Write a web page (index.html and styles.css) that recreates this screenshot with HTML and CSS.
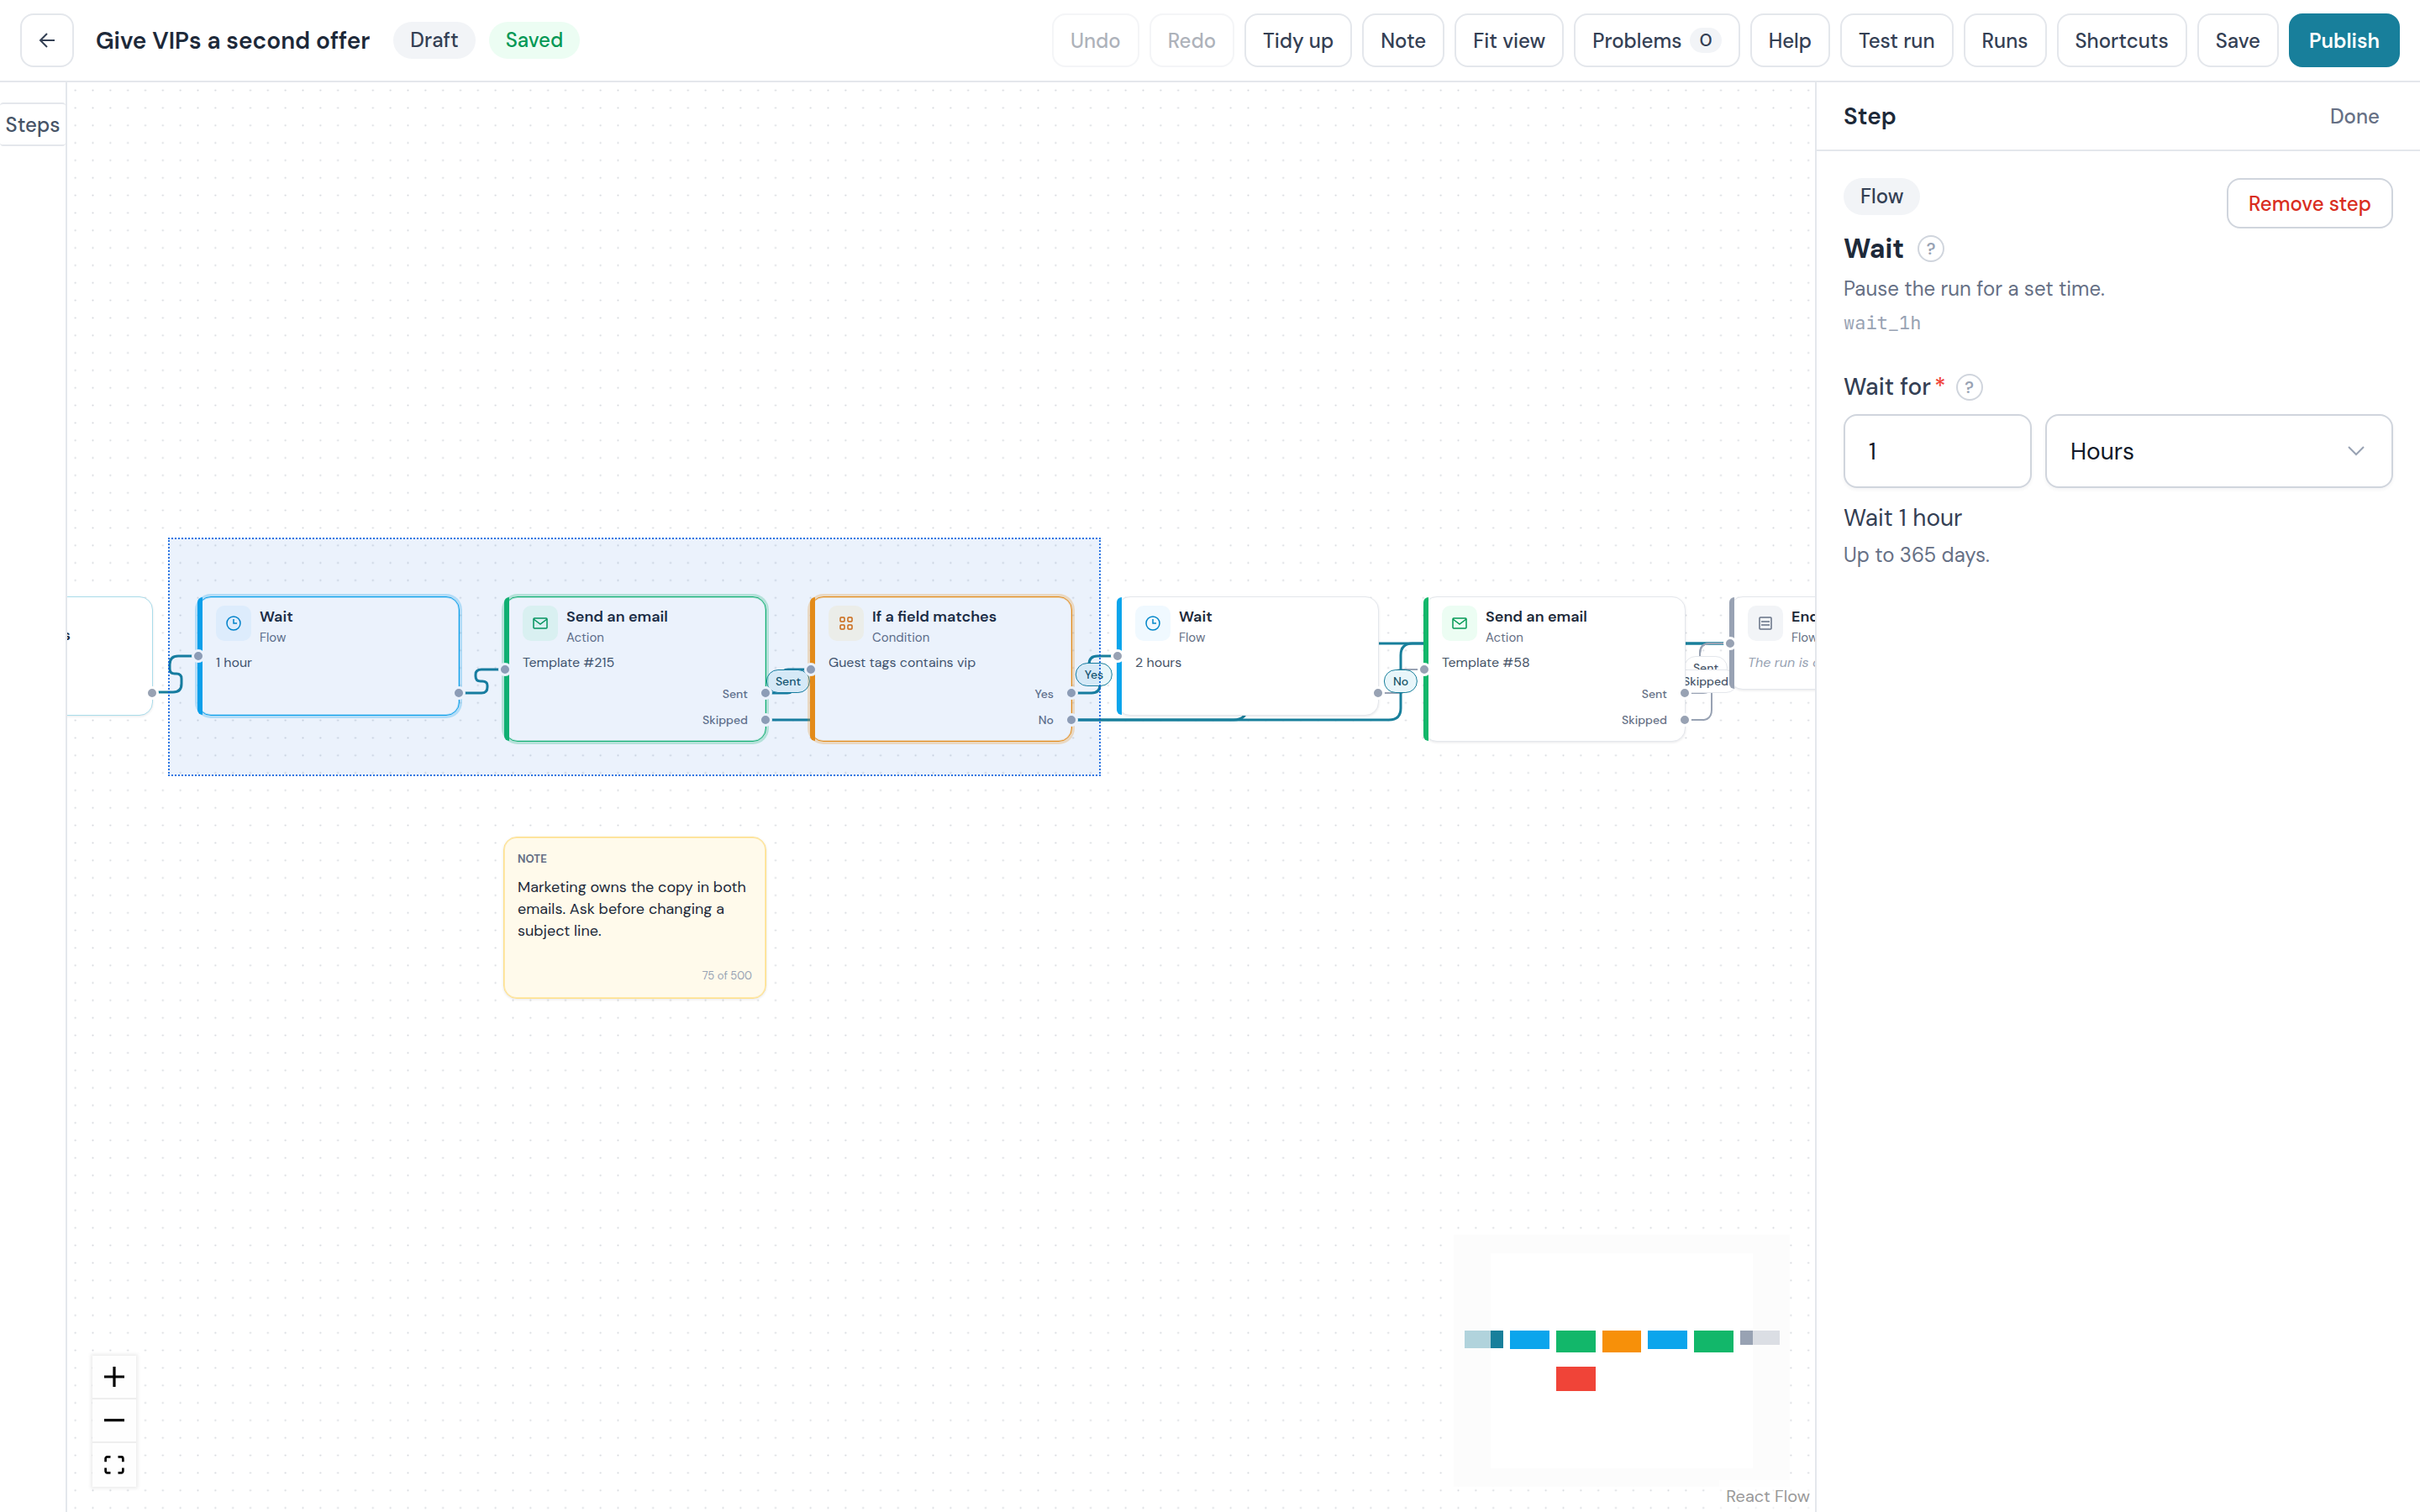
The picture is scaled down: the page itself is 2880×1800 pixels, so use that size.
FILE: index.html
```html
<!DOCTYPE html>
<html lang="en">
<head>
  <meta charset="UTF-8">
  <title>Give VIPs a second offer</title>
  <link rel="stylesheet" href="styles.css">
</head>
<body>

  <!-- TOP BAR -->
  <header class="topbar">
    <button class="btn btn-back" type="button" aria-label="Back">
      <svg width="20" height="20" viewBox="0 0 20 20"><path d="M19 10H2M10 2L2 10l8 8"/></svg>
    </button>
    <h1>Give VIPs a second offer</h1>
    <span class="pill">Draft</span>
    <span class="pill pill-saved">Saved</span>
    <div class="actions">
      <button class="btn" type="button" disabled>Undo</button>
      <button class="btn" type="button" disabled>Redo</button>
      <button class="btn" type="button">Tidy up</button>
      <button class="btn" type="button">Note</button>
      <button class="btn" type="button">Fit view</button>
      <button class="btn" type="button">Problems <span class="count">0</span></button>
      <button class="btn" type="button">Help</button>
      <button class="btn" type="button">Test run</button>
      <button class="btn" type="button">Runs</button>
      <button class="btn" type="button">Shortcuts</button>
      <button class="btn" type="button">Save</button>
      <button class="btn btn-primary" type="button">Publish</button>
    </div>
  </header>

  <main class="editor">

    <!-- LEFT RAIL -->
    <aside class="rail">
      <button class="rail-btn" type="button">Steps</button>
    </aside>

    <!-- CANVAS -->
    <section class="canvas">
      <svg class="layer" width="100%" height="100%">
        <defs>
          <pattern id="dots" width="16" height="16" patternUnits="userSpaceOnUse" patternTransform="translate(-0.750 -0.830) scale(1.302083)">
            <circle cx="8" cy="8" r="0.800" fill="#d3d6db"/>
          </pattern>
        </defs>
        <rect width="100%" height="100%" fill="url(#dots)"/>
      </svg>

      <svg class="layer edges" width="100%" height="100%">
        <g transform="translate(-80 -98)">
          <path class="edge" d="M1641 825H1666Q1673 825 1673 818V816Q1673 811 1668 811H1666Q1660 811 1660 805V803Q1660 797 1667 797H1694"/>
          <path class="edge active" d="M183 824H206Q216 824 216 814V808Q216 802 210 802H208Q202 802 202 796V791Q202 781 212 781H235"/>
          <path class="edge active" d="M548 825H573Q580 825 580 818V816Q580 811 574 811H572Q566 811 566 805V803Q566 797 573 797H600"/>
          <path class="edge active" d="M912 825H937Q944 825 944 818V816Q944 811 939 811H937Q931 811 931 805V803Q931 797 938 797H964"/>
          <path class="edge active" d="M1277 825H1299Q1309 825 1309 815V809Q1309 803 1303 803H1302Q1296 803 1296 797V791Q1296 781 1306 781H1329"/>
          <path class="edge active" d="M912 857H1468Q1484 857 1484 841V782Q1484 766 1500 766H2057"/>
          <path class="edge active" d="M1277 857H1653Q1667 857 1667 843V780Q1667 766 1681 766H2057"/>
          <path class="edge" d="M2003 825H2027Q2037 825 2037 815V802Q2037 796 2031 796H2029Q2023 796 2023 790V778Q2023 766 2035 766H2057"/>
          <path class="edge" d="M2003 857H2025Q2037 857 2037 845V817Q2037 811 2031 811H2029Q2023 811 2023 805V778Q2023 766 2035 766H2057"/>
        </g>
      </svg>

      <span class="edge-label on label-1">Sent</span>
      <span class="edge-label on label-2">Yes</span>
      <span class="edge-label on label-3">No</span>
      <span class="edge-label label-4">Sent</span>
      <span class="edge-label label-5">Skipped</span>

      <!-- NODES -->
      <article class="node short trigger node-0">
        <strong>s</strong>
        <i class="handle right out-1"></i>
      </article>

      <article class="node short flow selected node-1">
        <div class="node-head">
          <span class="node-icon"><svg width="20" height="20" viewBox="0 0 20 20"><circle cx="10" cy="10" r="8"/><path d="M10 5v5h4"/></svg></span>
          <div><h3>Wait</h3><small>Flow</small></div>
        </div>
        <p>1 hour</p>
        <i class="handle in-high"></i>
        <i class="handle right out-1"></i>
      </article>

      <article class="node action selected node-2">
        <div class="node-head">
          <span class="node-icon"><svg width="20" height="20" viewBox="0 0 20 20"><rect x="2" y="4" width="16" height="12" rx="1"/><path d="M2 5l8 6 8-6"/></svg></span>
          <div><h3>Send an email</h3><small>Action</small></div>
        </div>
        <p>Template #215</p>
        <ul class="ports"><li>Sent</li><li>Skipped</li></ul>
        <i class="handle in-mid"></i>
        <i class="handle right out-1"></i>
        <i class="handle right out-2"></i>
      </article>

      <article class="node condition selected node-3">
        <div class="node-head">
          <span class="node-icon"><svg width="20" height="20" viewBox="0 0 20 20"><rect x="3" y="3" width="5" height="5" rx="1"/><rect x="12" y="3" width="5" height="5" rx="1"/><rect x="3" y="12" width="5" height="5" rx="1"/><rect x="12" y="12" width="5" height="5" rx="1"/></svg></span>
          <div><h3>If a field matches</h3><small>Condition</small></div>
        </div>
        <p>Guest tags contains vip</p>
        <ul class="ports"><li>Yes</li><li>No</li></ul>
        <i class="handle in-mid"></i>
        <i class="handle right out-1"></i>
        <i class="handle right out-2"></i>
      </article>

      <article class="node short flow node-4">
        <div class="node-head">
          <span class="node-icon"><svg width="20" height="20" viewBox="0 0 20 20"><circle cx="10" cy="10" r="8"/><path d="M10 5v5h4"/></svg></span>
          <div><h3>Wait</h3><small>Flow</small></div>
        </div>
        <p>2 hours</p>
        <i class="handle in-high"></i>
        <i class="handle right out-1"></i>
      </article>

      <article class="node action node-5">
        <div class="node-head">
          <span class="node-icon"><svg width="20" height="20" viewBox="0 0 20 20"><rect x="2" y="4" width="16" height="12" rx="1"/><path d="M2 5l8 6 8-6"/></svg></span>
          <div><h3>Send an email</h3><small>Action</small></div>
        </div>
        <p>Template #58</p>
        <ul class="ports"><li>Sent</li><li>Skipped</li></ul>
        <i class="handle in-mid"></i>
        <i class="handle right out-1"></i>
        <i class="handle right out-2"></i>
      </article>

      <article class="node end node-6">
        <div class="node-head">
          <span class="node-icon"><svg width="20" height="20" viewBox="0 0 20 20"><rect x="3" y="3" width="14" height="14" rx="1"/><path d="M5 8h10M5 12h10"/></svg></span>
          <div><h3>End</h3><small>Flow</small></div>
        </div>
        <p class="muted">The run is over</p>
        <i class="handle in-end"></i>
      </article>

      <article class="note">
        <h4>NOTE</h4>
        <p>Marketing owns the copy in both emails. Ask before changing a subject line.</p>
        <small>75 of 500</small>
      </article>

      <div class="selection"></div>

      <div class="controls">
        <button type="button" aria-label="Zoom in"><svg width="24" height="24" viewBox="0 0 32 32"><path d="M32 18.133H18.133V32h-4.266V18.133H0v-4.266h13.867V0h4.266v13.867H32z"/></svg></button>
        <button type="button" aria-label="Zoom out"><svg width="24" height="4" viewBox="0 0 32 5"><path d="M0 0h32v4.200H0z"/></svg></button>
        <button type="button" aria-label="Fit view"><svg width="24" height="22" viewBox="0 0 32 30"><path d="M3.692 4.630c0-.530.400-.938.939-.938h5.215V0H4.708C2.130 0 0 2.054 0 4.630v5.216h3.692V4.630zM27.354 0h-5.200v3.692h5.170c.530 0 .984.400.984.939v5.215H32V4.631A4.624 4.624 0 0 0 27.354 0zm.954 24.830c0 .532-.400.940-.939.940h-5.215v3.768h5.215c2.577 0 4.631-2.130 4.631-4.707v-5.139h-3.692v5.139zm-23.677.940a.919.919 0 0 1-.939-.940v-5.138H0v5.139c0 2.577 2.130 4.707 4.708 4.707h5.138V25.770H4.631z"/></svg></button>
      </div>

      <svg class="minimap" width="400" height="300" viewBox="1730 1470 400 300">
        <rect x="1730" y="1470" width="400" height="300" fill="#fff"/>
        <rect x="1743" y="1584" width="46" height="21" fill="#187f9b"/>
        <rect x="1797" y="1584" width="47" height="22" fill="#0ba5ec"/>
        <rect x="1852" y="1584" width="47" height="26" fill="#12b76a"/>
        <rect x="1907" y="1584" width="46" height="26" fill="#f79009"/>
        <rect x="1961" y="1584" width="47" height="22" fill="#0ba5ec"/>
        <rect x="2016" y="1584" width="47" height="26" fill="#12b76a"/>
        <rect x="2071" y="1584" width="47" height="17" fill="#98a2b3"/>
        <rect x="1852" y="1627" width="47" height="29" fill="#f04438"/>
        <path fill="#fafafa" fill-opacity="0.680" fill-rule="evenodd" d="M1730 1470h400v300h-400zM1774 1492v256h312v-256z"/>
      </svg>
      <a class="attribution" href="#">React Flow</a>
    </section>

    <!-- STEP PANEL -->
    <aside class="panel">
      <div class="panel-head">
        <h2>Step</h2>
        <button class="done" type="button">Done</button>
      </div>
      <div class="panel-body">
        <div class="step-top">
          <span class="pill">Flow</span>
          <button class="btn btn-danger" type="button">Remove step</button>
        </div>
        <div class="step-title">
          <h2>Wait</h2>
          <button class="hint" type="button" aria-label="About this step">?</button>
        </div>
        <p class="help">Pause the run for a set time.</p>
        <code>wait_1h</code>

        <div class="field-label">
          <label for="amount">Wait for<span class="required">*</span></label>
          <button class="hint" type="button" aria-label="About this field">?</button>
        </div>
        <div class="field-row">
          <input type="text" id="amount" value="1">
          <div class="select-wrap">
            <select id="unit" aria-label="Unit">
              <option>Hours</option>
            </select>
            <svg width="20" height="12" viewBox="0 0 20 12"><path d="M1 1l9 9 9-9"/></svg>
          </div>
        </div>
        <p class="summary">Wait 1 hour</p>
        <p class="help">Up to 365 days.</p>
      </div>
    </aside>

  </main>
</body>
</html>
```
FILE: styles.css
```css
* {
  box-sizing: border-box;
}

body {
  margin: 0;
  height: 100vh;
  display: flex;
  flex-direction: column;
  overflow: hidden;
  background: #fff;
  color: #1d2939;
  font-family: "DM Sans", Inter, sans-serif;
  font-size: 24px;
}

h1, h2, h3, h4, p, ul {
  margin: 0;
  padding: 0;
}

button, input, select {
  font: inherit;
  color: inherit;
}

svg {
  display: block;
}

/* top bar */
.topbar {
  display: flex;
  align-items: center;
  height: 98px;
  padding: 0 24px;
  border-bottom: 2px solid #e4e7ec;
}

.topbar h1 {
  margin: 0 28px 0 26px;
  font-size: 28px;
  font-weight: 600;
}

.pill {
  padding: 0 20px;
  border-radius: 22px;
  background: #f2f4f7;
  color: #344054;
  font-weight: 500;
  line-height: 44px;
}

.pill-saved {
  margin-left: 16px;
  background: #ecfdf3;
  color: #039855;
}

.actions {
  display: flex;
  gap: 12px;
  margin-left: auto;
}

.btn {
  display: flex;
  align-items: center;
  gap: 10px;
  height: 64px;
  padding: 0 20px;
  border: 2px solid #e4e7ec;
  border-radius: 16px;
  background: #fff;
  color: #344054;
  font-weight: 500;
  white-space: nowrap;
}

.btn:disabled {
  opacity: 0.4;
}

.btn-back {
  justify-content: center;
  width: 64px;
  padding: 0;
}

.btn-back svg {
  fill: none;
  stroke: #344054;
  stroke-width: 2;
}

.btn-primary {
  padding: 0 22px;
  border-color: #187f9b;
  background: #187f9b;
  color: #fff;
  font-weight: 600;
}

.count {
  padding: 0 11px;
  border-radius: 15px;
  background: #f2f4f7;
  font-size: 22px;
  line-height: 30px;
}

/* editor columns */
.editor {
  flex: 1;
  min-height: 0;
  display: grid;
  grid-template-columns: 80px 1fr 720px;
}

.rail {
  padding-top: 24px;
  border-right: 2px solid #e4e7ec;
}

.rail-btn {
  width: 100%;
  height: 52px;
  padding: 0;
  border: solid #e4e7ec;
  border-width: 2px 0;
  border-radius: 4px;
  background: #fff;
  color: #475467;
  font-weight: 500;
}

/* canvas */
.canvas {
  position: relative;
  overflow: hidden;
}

.layer {
  position: absolute;
  inset: 0;
}

.edge {
  fill: none;
  stroke: #98a2b3;
  stroke-width: 2;
}

.edge.active {
  stroke: #187f9b;
  stroke-width: 3;
}

.edge-label {
  position: absolute;
  height: 28px;
  padding: 0 10px;
  border: 1px solid #e4e7ec;
  border-radius: 14px;
  background: #fff;
  color: #475467;
  font-size: 14px;
  font-weight: 500;
  line-height: 26px;
  transform: translateX(-50%);
}

.edge-label.on {
  border-color: #187f9b;
  background: #e8f6fa;
  color: #155468;
}

.label-1 { left: 858px; top: 699px; }
.label-2 { left: 1222px; top: 691px; }
.label-3 { left: 1587px; top: 699px; }
.label-4 { left: 1950px; top: 683px; }
.label-5 { left: 1950px; top: 699px; }

.node {
  --accent: #98a2b3;
  --tint: #f2f4f7;
  --ink: #667085;
  --ring: transparent;
  position: absolute;
  top: 612px;
  width: 312px;
  height: 173px;
  padding: 10px 21px;
  border: 1px solid #e4e7ec;
  border-radius: 16px;
  background: #fff;
  box-shadow: 0 1px 3px rgba(16, 24, 40, 0.1);
}

.node::before {
  content: "";
  position: absolute;
  left: -1px;
  top: 0;
  bottom: 0;
  width: 6px;
  border-radius: 6px 0 0 6px;
  background: var(--accent);
}

.node.short { height: 142px; }
.node.end { height: 111px; }

.node.flow {
  --accent: #0ba5ec;
  --tint: #f0f9ff;
  --ink: #0086c9;
  --ring: rgba(11, 165, 236, 0.25);
}

.node.action {
  --accent: #12b76a;
  --tint: #ecfdf3;
  --ink: #039855;
  --ring: rgba(18, 183, 106, 0.25);
}

.node.condition {
  --accent: #f79009;
  --tint: #fffaeb;
  --ink: #dc6803;
  --ring: rgba(247, 144, 9, 0.25);
}

.node.trigger {
  border-color: #a9dcea;
  padding-top: 34px;
  text-align: right;
}

.node.trigger strong {
  display: block;
  margin-right: 76px;
  font-size: 18px;
  font-weight: 600;
  line-height: 22px;
}

.node.selected {
  border-color: var(--accent);
  box-shadow: 0 0 0 3px var(--ring), inset 0 0 0 1px var(--ring);
}

.node-0 { left: -210px; }
.node-1 { left: 155px; }
.node-2 { left: 520px; }
.node-3 { left: 884px; }
.node-4 { left: 1249px; }
.node-5 { left: 1614px; }
.node-6 { left: 1978px; }

.node-head {
  display: flex;
  gap: 10px;
}

.node-icon {
  display: grid;
  place-items: center;
  width: 42px;
  height: 42px;
  border-radius: 10px;
  background: var(--tint);
}

.node-icon svg {
  fill: none;
  stroke: var(--ink);
  stroke-width: 1.5;
}

.node h3 {
  font-size: 18px;
  font-weight: 600;
  line-height: 26px;
  white-space: nowrap;
}

.node small {
  display: block;
  color: #667085;
  font-size: 15px;
  line-height: 24px;
}

.node p {
  margin-top: 6px;
  color: #475467;
  font-size: 16px;
  line-height: 24px;
  white-space: nowrap;
}

.node .muted {
  color: #98a2b3;
  font-style: italic;
}

.ports {
  margin-top: 10px;
  list-style: none;
  color: #667085;
  font-size: 14px;
  font-weight: 500;
  line-height: 31px;
  text-align: right;
}

.handle {
  position: absolute;
  left: -8px;
  width: 16px;
  height: 16px;
  border: 3px solid #fff;
  border-radius: 50%;
  background: #98a2b3;
}

.handle.right {
  left: auto;
  right: -8px;
}

.in-end { top: 47px; }
.in-high { top: 62px; }
.in-mid { top: 78px; }
.out-1 { top: 106px; }
.out-2 { top: 138px; }

.note {
  position: absolute;
  left: 519px;
  top: 898px;
  display: flex;
  flex-direction: column;
  width: 313px;
  height: 193px;
  padding: 14px 16px;
  border: 1px solid #fedf89;
  border-radius: 16px;
  background: #fffaeb;
  box-shadow: 0 1px 3px rgba(16, 24, 40, 0.1), inset 0 0 0 1px #feeab0;
}

.note h4 {
  color: #667085;
  font-size: 13px;
  font-weight: 700;
  line-height: 24px;
}

.note p {
  margin-top: 8px;
  font-size: 18px;
  line-height: 26px;
}

.note small {
  margin-top: auto;
  color: #98a2b3;
  font-size: 13px;
  line-height: 24px;
  text-align: right;
}

.selection {
  position: absolute;
  left: 120px;
  top: 542px;
  width: 1110px;
  height: 284px;
  border: 2px dotted rgba(0, 89, 220, 0.8);
  background: rgba(0, 89, 220, 0.08);
}

.controls {
  position: absolute;
  left: 30px;
  bottom: 30px;
  box-shadow: 0 0 4px 2px rgba(0, 0, 0, 0.08);
}

.controls button {
  display: grid;
  place-items: center;
  width: 52px;
  height: 52px;
  padding: 0;
  border: 0;
  border-bottom: 2px solid #eee;
  background: #fefefe;
}

.controls button:last-child {
  border-bottom: 0;
}

.minimap {
  position: absolute;
  right: 30px;
  bottom: 30px;
}

.attribution {
  position: absolute;
  right: 0;
  bottom: 0;
  padding: 4px 6px 4px 8px;
  background: rgba(255, 255, 255, 0.5);
  color: #999;
  font-size: 20px;
  line-height: 30px;
  text-decoration: none;
}

/* step panel */
.panel {
  border-left: 2px solid #e4e7ec;
}

.panel-head {
  display: flex;
  align-items: center;
  justify-content: space-between;
  height: 82px;
  padding: 0 32px;
  border-bottom: 2px solid #e4e7ec;
}

.panel-head h2 {
  font-size: 28px;
  font-weight: 600;
}

.done {
  padding: 0 16px;
  border: 0;
  background: none;
  color: #667085;
  font-weight: 500;
}

.panel-body {
  padding: 32px;
}

.step-top {
  display: flex;
  align-items: flex-start;
  justify-content: space-between;
}

.btn-danger {
  height: 60px;
  padding: 0 24px;
  border-color: #d0d5dd;
  color: #d92d20;
}

.step-title,
.field-label {
  display: flex;
  align-items: center;
}

.step-title {
  gap: 16px;
  margin-top: 4px;
}

.step-title h2 {
  font-size: 32px;
  font-weight: 700;
  line-height: 40px;
}

.hint {
  width: 32px;
  height: 32px;
  padding: 0;
  border: 2px solid #d0d5dd;
  border-radius: 50%;
  background: #fff;
  color: #98a2b3;
  font-size: 20px;
  font-weight: 600;
  line-height: 28px;
}

.help {
  margin-top: 8px;
  color: #667085;
  line-height: 40px;
}

code {
  display: block;
  color: #98a2b3;
  font-family: "JetBrains Mono", "DM Mono", "Roboto Mono", "DejaVu Sans Mono", monospace;
  font-size: 22px;
  line-height: 42px;
}

.field-label {
  gap: 12px;
  margin-top: 35px;
  color: #344054;
  font-size: 28px;
  font-weight: 500;
  line-height: 40px;
}

.required {
  margin-left: 4px;
  color: #f04438;
}

.field-row {
  display: grid;
  grid-template-columns: 224px 1fr;
  gap: 16px;
  margin-top: 12px;
}

input,
select {
  width: 100%;
  height: 88px;
  padding: 0 28px;
  border: 2px solid #d0d5dd;
  border-radius: 16px;
  background: #fff;
  color: #101828;
  font-size: 28px;
  box-shadow: 0 2px 4px rgba(16, 24, 40, 0.05);
  appearance: none;
}

.select-wrap {
  position: relative;
}

.select-wrap svg {
  position: absolute;
  right: 34px;
  top: 38px;
  fill: none;
  stroke: #98a2b3;
  stroke-width: 2;
}

.summary {
  margin-top: 16px;
  color: #344054;
  font-size: 28px;
  line-height: 40px;
}

.summary + .help {
  margin-top: 4px;
}
```
